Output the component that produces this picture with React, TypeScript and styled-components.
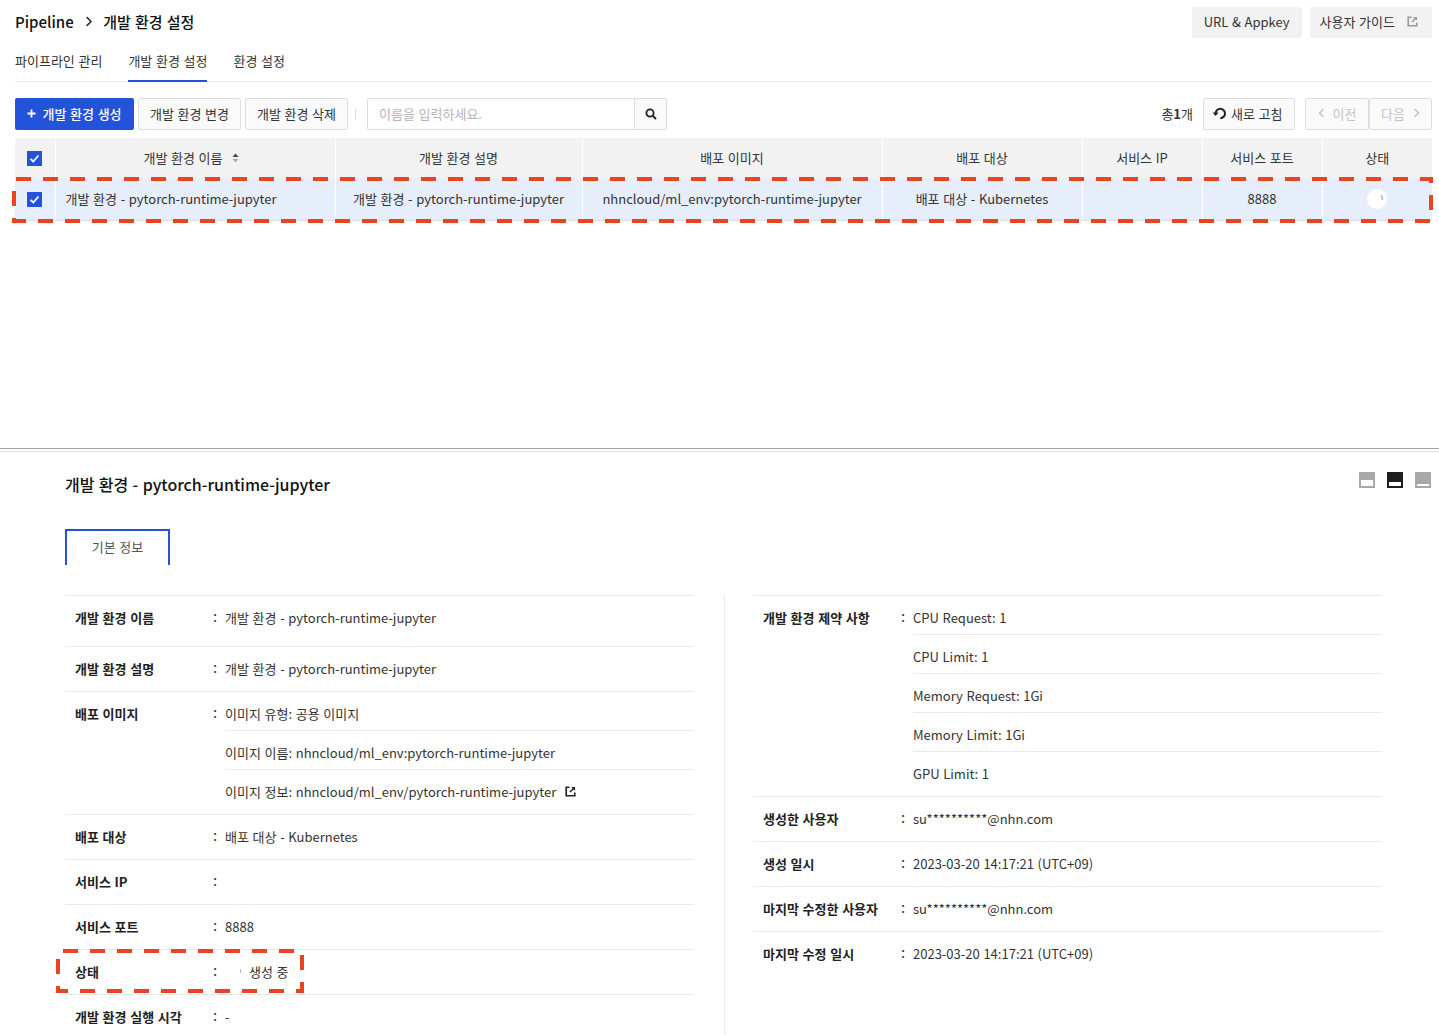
import React from "react";
import styled, { createGlobalStyle } from "styled-components";

const Global = createGlobalStyle`
  html, body { margin: 0; padding: 0; background: #fff; }
  body { font-family: "Noto Sans CJK KR", "Noto Sans", sans-serif; color: #333; font-size: 13px; word-spacing: 0.75px; }
  * { box-sizing: border-box; }
`;

const Page = styled.div`
  position: relative;
  width: 1439px;
  height: 1035px;
  overflow: hidden;
`;
const Top = styled.section`
  height: 448px;
  padding: 7px 7px 0 15px;
`;
const Header = styled.header`
  display: flex;
  justify-content: space-between;
  align-items: center;
  height: 31px;
`;
const Crumbs = styled.div`
  display: flex;
  align-items: center;
  gap: 11px;
  padding-bottom: 3px;
  font-size: 15px;
  font-weight: 500;
  color: #111;
`;
const HeaderActions = styled.div`
  display: flex;
  gap: 8px;
`;
const GhostButton = styled.div`
  display: flex;
  align-items: center;
  justify-content: center;
  gap: 12px;
  height: 31px;
  padding: 0 12px 2px;
  background: #f2f2f2;
  border-radius: 2px;
  font-size: 13px;
  color: #333;
`;
const GuideButton = styled(GhostButton)`
  padding: 0 14px 2px 10px;
`;
const Tabs = styled.nav`
  display: flex;
  gap: 26px;
  height: 44px;
  border-bottom: 1px solid #e9e9e9;
`;
const Tab = styled.div<{ $active?: boolean }>`
  display: flex;
  align-items: center;
  height: 44px;
  padding-top: 2px;
  font-size: 13px;
  color: #333;
  border-bottom: 2px solid ${(p) => (p.$active ? "#2453db" : "transparent")};
`;
const Toolbar = styled.div`
  display: flex;
  align-items: center;
  height: 32px;
  margin-top: 16px;
`;
const Primary = styled.div`
  display: flex;
  align-items: center;
  justify-content: center;
  gap: 6px;
  width: 119px;
  height: 32px;
  padding-bottom: 2px;
  background: #2453db;
  border-radius: 2px;
  color: #fff;
  font-size: 13px;
  font-weight: 500;
`;
const Outline = styled.div<{ $disabled?: boolean }>`
  display: flex;
  align-items: center;
  justify-content: center;
  gap: 4px;
  height: 32px;
  padding-bottom: 2px;
  background: #fafafa;
  border: 1px solid #ddd;
  border-radius: 2px;
  font-size: 13px;
  color: ${(p) => (p.$disabled ? "#c4c4c4" : "#333")};
`;
const ActionBtn = styled(Outline)`
  width: 103px;
  margin-left: 4px;
`;
const Sep = styled.span`
  width: 1px;
  height: 12px;
  background: #ddd;
  margin: 0 11px 0 7px;
`;
const Search = styled.div`
  display: flex;
  width: 300px;
  height: 32px;
  border: 1px solid #ddd;
  border-radius: 2px;
`;
const SearchInput = styled.div`
  flex: 1;
  display: flex;
  align-items: center;
  padding: 0 0 1px 11px;
  font-size: 13px;
  color: #b5b5b5;
`;
const SearchBtn = styled.div`
  display: flex;
  align-items: center;
  justify-content: center;
  width: 32px;
  padding-bottom: 1px;
  background: #fafafa;
  border-left: 1px solid #ddd;
`;
const Spacer = styled.div`
  flex: 1;
`;
const Total = styled.span`
  padding-bottom: 2px;
  font-size: 13px;
  color: #333;
  margin-right: 10px;
  b { font-weight: 700; }
`;
const Refresh = styled(Outline)`
  justify-content: flex-start;
  gap: 5px;
  width: 92px;
  margin-right: 10px;
  padding-left: 8px;
`;
const Pager = styled(Outline)<{ $w: number }>`
  width: ${(p) => p.$w}px;
  gap: 8px;
`;
const Table = styled.table`
  width: 1417px;
  margin-top: 8px;
  border-collapse: collapse;
  table-layout: fixed;
`;
const Th = styled.th`
  height: 41px;
  padding: 0 0 2px;
  background: #f2f2f2;
  border-right: 1px solid #fff;
  font-size: 13px;
  font-weight: 400;
  color: #333;
  text-align: center;
  &:last-child { border-right: none; }
`;
const Td = styled.td<{ $left?: boolean }>`
  height: 41px;
  padding: ${(p) => (p.$left ? "0 0 2px 10px" : "0 0 2px")};
  background: #e6edfb;
  border-right: 1px solid #fff;
  border-bottom: 1px solid #ddd;
  font-size: 13px;
  color: #333;
  text-align: ${(p) => (p.$left ? "left" : "center")};
  white-space: nowrap;
  &:last-child { border-right: none; }
`;
const Check = styled.span`
  display: flex;
  align-items: center;
  justify-content: center;
  width: 15px;
  height: 15px;
  margin: 2px auto 0;
  background: #2453db;
`;
const HeadLabel = styled.span`
  display: inline-flex;
  align-items: center;
  gap: 9px;
  padding-right: 8px;
`;
const Spinner = styled.span`
  position: relative;
  display: block;
  width: 20px;
  height: 20px;
  margin: 2px auto 0;
  border-radius: 50%;
  background: #fff;
  &::after {
    content: "";
    position: absolute;
    top: 6px;
    left: 14px;
    width: 2px;
    height: 5px;
    background: #c4c4c4;
    transform: rotate(-15deg);
  }
`;
const Splitter = styled.div`
  height: 4px;
  border-top: 1px solid #a6a6a6;
  border-bottom: 1px solid #dedede;
`;
const Detail = styled.section`
  padding: 0 56px 0 65px;
`;
const DetailHead = styled.div`
  position: relative;
  display: flex;
  align-items: center;
  height: 60px;
  padding-top: 4px;
`;
const DetailTitle = styled.h2`
  margin: 0;
  font-size: 16px;
  font-weight: 500;
  color: #111;
`;
const LayoutIcons = styled.div`
  position: absolute;
  top: 20px;
  right: -48px;
  display: flex;
  gap: 12px;
`;
const LayoutIcon = styled.span<{ $dark?: boolean; $h: number }>`
  position: relative;
  display: block;
  width: 16px;
  height: 16px;
  background: ${(p) => (p.$dark ? "#1f1f1f" : "#a8a8a8")};
  &::after {
    content: "";
    position: absolute;
    left: 2px;
    right: 2px;
    bottom: 2px;
    height: ${(p) => p.$h}px;
    background: #fff;
  }
`;
const InfoTab = styled.div`
  display: flex;
  align-items: center;
  justify-content: center;
  width: 105px;
  height: 36px;
  margin-top: 17px;
  padding-bottom: 3px;
  border: 2px solid #2453db;
  border-bottom: none;
  font-size: 13px;
  color: #555;
`;
const Columns = styled.div`
  display: flex;
  margin-top: 30px;
`;
const Column = styled.div`
  width: 629px;
  border-top: 1px solid #e9e9e9;
`;
const Divider = styled.div`
  width: 1px;
  height: 440px;
  margin: 0 28px 0 30px;
  background: #e9e9e9;
`;
const Row = styled.div<{ $h?: number; $noBorder?: boolean }>`
  display: flex;
  min-height: ${(p) => p.$h ?? 45}px;
  border-bottom: ${(p) => (p.$noBorder ? "none" : "1px solid #e9e9e9")};
`;
const Label = styled.div`
  width: 148px;
  padding: 12px 0 0 10px;
  flex: none;
  font-size: 13px;
  font-weight: 700;
  line-height: 20px;
  color: #222;
`;
const Colon = styled.div`
  width: 12px;
  flex: none;
  padding-top: 10px;
  font-size: 15px;
  line-height: 20px;
  color: #333;
`;
const Value = styled.div`
  flex: 1;
  padding-top: 12px;
  font-size: 13px;
  line-height: 20px;
  color: #333;
`;
const Lines = styled.div`
  flex: 1;
`;
const Line = styled.div`
  display: flex;
  align-items: center;
  gap: 9px;
  height: 39px;
  padding-top: 5px;
  font-size: 13px;
  border-bottom: 1px solid #e9e9e9;
  color: #333;
  &:last-child { border-bottom: none; height: 44px; padding-bottom: 7px; }
`;
const Status = styled.span`
  display: flex;
  align-items: center;
  gap: 8px;
`;
const Tick = styled.span`
  display: block;
  width: 1px;
  height: 4px;
  margin: 0 0 3px 15px;
  background: #bbb;
`;
const Annotation = styled.svg<{ $x: number; $y: number }>`
  position: absolute;
  left: ${(p) => p.$x}px;
  top: ${(p) => p.$y}px;
  overflow: visible;
  pointer-events: none;
`;

const CheckBox = () => (
  <Check>
    <svg width="11" height="11" viewBox="0 0 11 11">
      <path d="M1.5 5.8 4.3 8.5 9.5 2.5" fill="none" stroke="#fff" strokeWidth="1.8" />
    </svg>
  </Check>
);

const External = ({ c = "#999" }: { c?: string }) => (
  <svg width="11" height="11" viewBox="0 0 11 11">
    <path d="M4.5 1.2H1.2v8.6h8.6V6.5" fill="none" stroke={c} strokeWidth="1.6" />
    <path d="M6.2 1H10v3.8L8.6 3.4 5.4 6.6 4.4 5.6 7.6 2.4Z" fill={c} />
  </svg>
);

const Chevron = ({ left, c = "#333", size = 10 }: { left?: boolean; c?: string; size?: number }) => (
  <svg width={size * 0.7} height={size} viewBox="0 0 7 10">
    <path d={left ? "M5.5 1 1.5 5l4 4" : "M1.5 1l4 4-4 4"} fill="none" stroke={c} strokeWidth="1.5" />
  </svg>
);

/* x, y, w, h describe the centre line of the 4px dashed stroke */
const Dashed = ({ x, y, w, h, offset }: { x: number; y: number; w: number; h: number; offset: number }) => (
  <Annotation $x={x} $y={y} width={w} height={h} viewBox={`0 0 ${w} ${h}`}>
    <rect
      x="0"
      y="0"
      width={w}
      height={h}
      fill="none"
      stroke="#ea4321"
      strokeWidth="4"
      strokeDasharray="15 12"
      strokeDashoffset={offset}
    />
  </Annotation>
);

const name = "개발 환경 - pytorch-runtime-jupyter";

export default function App() {
  return (
    <Page>
      <Global />
      <Top>
        <Header>
          <Crumbs>
            <span>Pipeline</span>
            <Chevron c="#333" size={11} />
            <span>개발 환경 설정</span>
          </Crumbs>
          <HeaderActions>
            <GhostButton>URL &amp; Appkey</GhostButton>
            <GuideButton>
              사용자 가이드
              <External />
            </GuideButton>
          </HeaderActions>
        </Header>
        <Tabs>
          <Tab>파이프라인 관리</Tab>
          <Tab $active>개발 환경 설정</Tab>
          <Tab>환경 설정</Tab>
        </Tabs>
        <Toolbar>
          <Primary>
            <svg width="9" height="9" viewBox="0 0 9 9">
              <path d="M4.5 0.5v8M0.5 4.5h8" stroke="#fff" strokeWidth="1.8" />
            </svg>
            개발 환경 생성
          </Primary>
          <ActionBtn>개발 환경 변경</ActionBtn>
          <ActionBtn>개발 환경 삭제</ActionBtn>
          <Sep />
          <Search>
            <SearchInput>이름을 입력하세요.</SearchInput>
            <SearchBtn>
              <svg width="12" height="12" viewBox="0 0 12 12">
                <circle cx="5" cy="5" r="3.6" fill="none" stroke="#222" strokeWidth="1.8" />
                <path d="M7.6 7.6 11 11" stroke="#222" strokeWidth="2" />
              </svg>
            </SearchBtn>
          </Search>
          <Spacer />
          <Total>
            총<b>1</b>개
          </Total>
          <Refresh>
            <svg width="14" height="13" viewBox="0 0 14 13">
              <path d="M3.6 6.5A4.7 4.7 0 1 1 8.3 11.2" fill="none" stroke="#222" strokeWidth="2" />
              <path d="M0.6 5.4h6L3.6 9Z" fill="#222" />
            </svg>
            새로 고침
          </Refresh>
          <Pager $disabled $w={64}>
            <Chevron left c="#c4c4c4" />
            이전
          </Pager>
          <Pager $disabled $w={63}>
            다음
            <Chevron c="#c4c4c4" />
          </Pager>
        </Toolbar>
        <Table>
          <colgroup>
            <col width="40" />
            <col width="280" />
            <col width="247" />
            <col width="300" />
            <col width="200" />
            <col width="120" />
            <col width="120" />
            <col width="110" />
          </colgroup>
          <thead>
            <tr>
              <Th>
                <CheckBox />
              </Th>
              <Th>
                <HeadLabel>
                  개발 환경 이름
                  <svg width="7" height="10" viewBox="0 0 7 10">
                    <path d="M3.5 0.5 6.5 4H.5Z" fill="#444" />
                    <path d="M3.5 9.5 6.5 6H.5Z" fill="#aaa" />
                  </svg>
                </HeadLabel>
              </Th>
              <Th>개발 환경 설명</Th>
              <Th>배포 이미지</Th>
              <Th>배포 대상</Th>
              <Th>서비스 IP</Th>
              <Th>서비스 포트</Th>
              <Th>상태</Th>
            </tr>
          </thead>
          <tbody>
            <tr>
              <Td>
                <CheckBox />
              </Td>
              <Td $left>{name}</Td>
              <Td>{name}</Td>
              <Td>nhncloud/ml_env:pytorch-runtime-jupyter</Td>
              <Td>배포 대상 - Kubernetes</Td>
              <Td />
              <Td>8888</Td>
              <Td>
                <Spinner />
              </Td>
            </tr>
          </tbody>
        </Table>
      </Top>
      <Splitter />
      <Detail>
        <DetailHead>
          <DetailTitle>{name}</DetailTitle>
          <LayoutIcons>
            <LayoutIcon $h={6} />
            <LayoutIcon $dark $h={4} />
            <LayoutIcon $h={2} />
          </LayoutIcons>
        </DetailHead>
        <InfoTab>기본 정보</InfoTab>
        <Columns>
          <Column>
            <Row $h={51}>
              <Label>개발 환경 이름</Label>
              <Colon>:</Colon>
              <Value>{name}</Value>
            </Row>
            <Row>
              <Label>개발 환경 설명</Label>
              <Colon>:</Colon>
              <Value>{name}</Value>
            </Row>
            <Row>
              <Label>배포 이미지</Label>
              <Colon>:</Colon>
              <Lines>
                <Line>이미지 유형: 공용 이미지</Line>
                <Line>이미지 이름: nhncloud/ml_env:pytorch-runtime-jupyter</Line>
                <Line>
                  이미지 정보: nhncloud/ml_env/pytorch-runtime-jupyter
                  <External c="#222" />
                </Line>
              </Lines>
            </Row>
            <Row>
              <Label>배포 대상</Label>
              <Colon>:</Colon>
              <Value>배포 대상 - Kubernetes</Value>
            </Row>
            <Row>
              <Label>서비스 IP</Label>
              <Colon>:</Colon>
              <Value />
            </Row>
            <Row>
              <Label>서비스 포트</Label>
              <Colon>:</Colon>
              <Value>8888</Value>
            </Row>
            <Row>
              <Label>상태</Label>
              <Colon>:</Colon>
              <Value>
                <Status>
                  <Tick />
                  생성 중
                </Status>
              </Value>
            </Row>
            <Row>
              <Label>개발 환경 실행 시각</Label>
              <Colon>:</Colon>
              <Value>-</Value>
            </Row>
          </Column>
          <Divider />
          <Column>
            <Row>
              <Label>개발 환경 제약 사항</Label>
              <Colon>:</Colon>
              <Lines>
                <Line>CPU Request: 1</Line>
                <Line>CPU Limit: 1</Line>
                <Line>Memory Request: 1Gi</Line>
                <Line>Memory Limit: 1Gi</Line>
                <Line>GPU Limit: 1</Line>
              </Lines>
            </Row>
            <Row>
              <Label>생성한 사용자</Label>
              <Colon>:</Colon>
              <Value>su**********@nhn.com</Value>
            </Row>
            <Row>
              <Label>생성 일시</Label>
              <Colon>:</Colon>
              <Value>2023-03-20 14:17:21 (UTC+09)</Value>
            </Row>
            <Row>
              <Label>마지막 수정한 사용자</Label>
              <Colon>:</Colon>
              <Value>su**********@nhn.com</Value>
            </Row>
            <Row $noBorder>
              <Label>마지막 수정 일시</Label>
              <Colon>:</Colon>
              <Value>2023-03-20 14:17:21 (UTC+09)</Value>
            </Row>
          </Column>
        </Columns>
      </Detail>
      <Dashed x={14} y={179} w={1417} h={42} offset={-2} />
      <Dashed x={58} y={951} w={244} h={40} offset={-5} />
    </Page>
  );
}
